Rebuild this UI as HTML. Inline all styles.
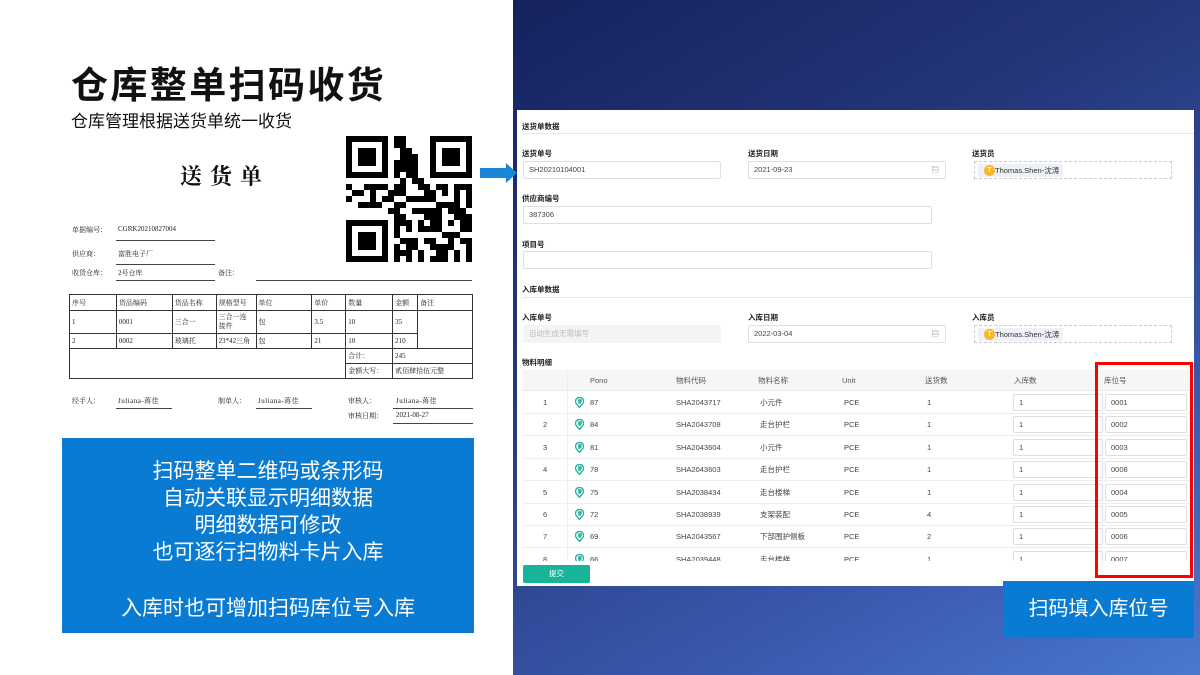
<!DOCTYPE html>
<html><head><meta charset="utf-8">
<style>
*{margin:0;padding:0;box-sizing:border-box}
body{width:1200px;height:675px;overflow:hidden;position:relative;font-family:"Liberation Sans","Noto Sans CJK SC",sans-serif;background:#fff}
.a{position:absolute;white-space:nowrap}
#right{position:absolute;left:513px;top:0;width:687px;height:675px;background:linear-gradient(150deg,#15225e 0%,#24367a 35%,#3a5aae 75%,#4a78d0 100%)}
.serif{font-family:"Liberation Serif","Noto Serif CJK SC",serif}
.doc{font-size:7px;color:#222}
.ul{position:absolute;height:1px;background:#444}
table.d{position:absolute;left:69px;top:294px;width:404px;border-collapse:collapse;font-size:7px;font-family:"Liberation Serif","Noto Serif CJK SC",serif;color:#222}
table.d td{border:1px solid #333;padding:0 2px;vertical-align:middle}
.blue{position:absolute;left:62px;top:438px;width:412px;height:195px;background:#0a7bd3;color:#fff;text-align:center;font-size:21px;font-family:"Liberation Sans","Noto Sans CJK SC",sans-serif}
.blue div{position:absolute;left:0;width:100%}
#panel{position:absolute;left:517px;top:110px;width:677px;height:476px;background:#fff;font-size:7.5px;color:#333;overflow:hidden}
.lbl{position:absolute;font-weight:bold;font-size:7.5px;color:#222}
.inp{position:absolute;border:1px solid #dcdfe6;border-radius:2px;height:18px;font-size:7.5px;line-height:16px;padding-left:5px;color:#444}
.tag{position:absolute;border:1px dashed #ccc;height:18px}
.tag span{position:absolute;left:3px;top:2px;height:13px;padding:0 4px 0 17px;background:#eef1f8;line-height:13px;font-size:7.5px;color:#333}
.tag i{position:absolute;left:6px;top:1px;width:11px;height:11px;border-radius:50%;background:#f5b82e;color:#fff;font-style:normal;font-size:7px;line-height:11px;text-align:center}
.hr{position:absolute;left:5px;right:0;height:1px;background:#e3e8f0}
.th{position:absolute;top:261px;height:20px;line-height:20px;font-size:7.5px;color:#555}
.cell{position:absolute;font-size:7.5px;color:#444;line-height:10px}
</style></head><body>

<div class="a" style="left:71px;top:55px;font-size:37px;font-weight:bold;color:#111;letter-spacing:2.4px">仓库整单扫码收货</div>
<div class="a" style="left:71px;top:107px;font-size:17px;color:#111">仓库管理根据送货单统一收货</div>

<div class="a serif" style="left:180px;top:160px;font-size:22px;font-weight:bold;letter-spacing:8px;color:#111">送货单</div>

<svg class="a" style="left:346px;top:136px" width="126" height="126" viewBox="0 0 21 21" shape-rendering="crispEdges">
<g fill="#000">
<path d="M0 0h7v7h-7zM1 1v5h5v-5zM2 2h3v3h-3z" fill-rule="evenodd"/>
<path d="M14 0h7v7h-7zM15 1v5h5v-5zM16 2h3v3h-3z" fill-rule="evenodd"/>
<path d="M0 14h7v7h-7zM1 15v5h5v-5zM2 16h3v3h-3z" fill-rule="evenodd"/>
<path d="M8 0h2v1h-2zM8 1h2v1h-2zM9 2h2v1h-2zM9 3h3v1h-3zM8 4h4v2h-4zM8 6h1v1h-1zM10 6h2v1h-2zM9 7h1v1h-1zM11 7h2v1h-2z"/>
<path d="M0 8h1v1h-1zM1 9h2v1h-2zM0 10h1v1h-1zM3 8h4v1h-4zM4 9h1v2h-1zM2 11h4v1h-4zM6 10h2v1h-2zM8 8h2v1h-2zM7 9h3v1h-3zM10 10h3v1h-3zM8 11h2v1h-2zM12 8h2v1h-2zM13 9h2v2h-2zM15 8h2v1h-2zM16 9h1v1h-1zM18 8h3v1h-3zM18 9h1v2h-1zM20 9h1v3h-1zM15 11h4v1h-4zM11 12h5v1h-5zM7 12h2v1h-2zM17 12h3v1h-3zM8 13h2v1h-2zM13 13h3v1h-3zM18 13h3v1h-3z"/>
<path d="M8 14h3v1h-3zM12 14h1v2h-1zM14 14h2v1h-2zM17 14h1v1h-1zM19 14h2v2h-2zM8 15h1v2h-1zM10 15h1v1h-1zM13 15h3v1h-3zM16 16h3v1h-3zM9 17h3v1h-3zM13 17h2v1h-2zM17 17h1v2h-1zM19 17h2v1h-2zM8 18h1v3h-1zM10 18h2v1h-2zM14 18h3v1h-3zM20 18h1v3h-1zM9 19h2v1h-2zM12 19h1v2h-1zM15 19h2v1h-2zM18 19h1v2h-1zM10 20h1v1h-1zM14 20h3v1h-3z"/>
</g></svg>

<div class="doc serif">
<div class="a" style="left:72px;top:225px">单据编号：</div><div class="a" style="left:118px;top:225px">CGRK20210827004</div>
<div class="ul" style="left:116px;top:240px;width:99px"></div>
<div class="a" style="left:72px;top:249px">供应商：</div><div class="a" style="left:118px;top:249px">富胜电子厂</div>
<div class="ul" style="left:116px;top:264px;width:99px"></div>
<div class="a" style="left:72px;top:268px">收货仓库：</div><div class="a" style="left:118px;top:268px">2号仓库</div>
<div class="ul" style="left:116px;top:280px;width:99px"></div>
<div class="a" style="left:218px;top:268px">备注：</div>
<div class="ul" style="left:256px;top:280px;width:216px"></div>
</div>

<table class="d">
<colgroup><col style="width:47px"><col style="width:56px"><col style="width:44px"><col style="width:40px"><col style="width:56px"><col style="width:34px"><col style="width:47px"><col style="width:25px"><col style="width:55px"></colgroup>
<tr style="height:16px"><td>序号</td><td>货品编码</td><td>货品名称</td><td>规格型号</td><td>单位</td><td>单价</td><td>数量</td><td>金额</td><td>备注</td></tr>
<tr style="height:23px"><td>1</td><td>0001</td><td>三合一</td><td style="line-height:9px">三合一连<br>接件</td><td>包</td><td>3.5</td><td>10</td><td>35</td><td rowspan="2"></td></tr>
<tr style="height:15px"><td>2</td><td>0002</td><td>玻璃托</td><td>23*42三角</td><td>包</td><td>21</td><td>10</td><td>210</td></tr>
<tr style="height:15px"><td colspan="6" rowspan="2"></td><td>合计：</td><td colspan="2">245</td></tr>
<tr style="height:15px"><td>金额大写：</td><td colspan="2">贰佰肆拾伍元整</td></tr>
</table>

<div class="doc serif">
<div class="a" style="left:72px;top:396px">经手人：</div><div class="a" style="left:118px;top:396px;letter-spacing:.5px">Juliana-蒋佳</div>
<div class="ul" style="left:116px;top:408px;width:56px"></div>
<div class="a" style="left:218px;top:396px">制单人：</div><div class="a" style="left:258px;top:396px;letter-spacing:.5px">Juliana-蒋佳</div>
<div class="ul" style="left:256px;top:408px;width:56px"></div>
<div class="a" style="left:348px;top:396px">审核人：</div><div class="a" style="left:396px;top:396px;letter-spacing:.5px">Juliana-蒋佳</div>
<div class="ul" style="left:393px;top:408px;width:80px"></div>
<div class="a" style="left:348px;top:411px">审核日期：</div><div class="a" style="left:396px;top:411px">2021-08-27</div>
<div class="ul" style="left:393px;top:423px;width:80px"></div>
</div>

<div class="blue">
<div style="top:17px">扫码整单二维码或条形码</div>
<div style="top:44px">自动关联显示明细数据</div>
<div style="top:71px">明细数据可修改</div>
<div style="top:98px">也可逐行扫物料卡片入库</div>
<div style="top:154px">入库时也可增加扫码库位号入库</div>
</div>

<div id="right"></div>
<svg class="a" style="left:480px;top:163px" width="38" height="20"><path d="M0 5h26v-5l11 10-11 10v-5h-26z" fill="#1a86d8"/></svg>

<div id="panel">
<div class="lbl" style="left:5px;top:11px">送货单数据</div>
<div class="hr" style="top:23px"></div>
<div class="lbl" style="left:5px;top:38px">送货单号</div>
<div class="lbl" style="left:231px;top:38px">送货日期</div>
<div class="lbl" style="left:455px;top:38px">送货员</div>
<div class="inp" style="left:6px;top:51px;width:198px">SH20210104001</div>
<div class="inp" style="left:231px;top:51px;width:198px">2021-09-23<span style="position:absolute;right:6px;color:#888">▤</span></div>
<div class="tag" style="left:457px;top:51px;width:198px"><span><i>T</i>Thomas.Shen-沈涛</span></div>
<div class="lbl" style="left:5px;top:83px">供应商编号</div>
<div class="inp" style="left:6px;top:96px;width:409px">387306</div>
<div class="lbl" style="left:5px;top:129px">项目号</div>
<div class="inp" style="left:6px;top:141px;width:409px"></div>
<div class="lbl" style="left:5px;top:174px">入库单数据</div>
<div class="hr" style="top:187px"></div>
<div class="lbl" style="left:5px;top:202px">入库单号</div>
<div class="lbl" style="left:231px;top:202px">入库日期</div>
<div class="lbl" style="left:455px;top:202px">入库员</div>
<div class="inp" style="left:6px;top:215px;width:198px;background:#f3f4f6;border-color:#f3f4f6;color:#bbb">自动生成无需填写</div>
<div class="inp" style="left:231px;top:215px;width:198px">2022-03-04<span style="position:absolute;right:6px;color:#888">▤</span></div>
<div class="tag" style="left:457px;top:215px;width:198px"><span><i>T</i>Thomas.Shen-沈涛</span></div>
<div class="lbl" style="left:5px;top:247px">物料明细</div>

<div style="position:absolute;left:6px;top:260px;width:670px;height:21px;background:#f5f6f8;border-bottom:1px solid #e8e8e8"></div>
<div style="position:absolute;left:50px;top:260px;width:1px;height:191px;background:#eee"></div>
<div class="th" style="left:73px">Pono</div>
<div class="th" style="left:159px">物料代码</div>
<div class="th" style="left:241px">物料名称</div>
<div class="th" style="left:325px">Unit</div>
<div class="th" style="left:408px">送货数</div>
<div class="th" style="left:497px">入库数</div>
<div class="th" style="left:587px">库位号</div>

<div id="rows"></div>
<div style="position:absolute;left:6px;top:451px;width:670px;height:25px;background:#fff"></div>
<div style="position:absolute;left:6px;top:455px;width:67px;height:18px;background:#19b39a;color:#fff;font-size:7.5px;text-align:center;line-height:18px;border-radius:2px">提交</div>
</div>

<div style="position:absolute;left:1095px;top:362px;width:98px;height:216px;border:3px solid #f00"></div>
<div style="position:absolute;left:1003px;top:581px;width:191px;height:57px;background:#0a7bd3;color:#fff;font-size:20px;text-align:center;line-height:57px">扫码填入库位号</div>

<script>
var d=[["87","SHA2043717","小元件","1","0001"],["84","SHA2043708","走台护栏","1","0002"],["81","SHA2043604","小元件","1","0003"],["78","SHA2043603","走台护栏","1","0008"],["75","SHA2038434","走台楼梯","1","0004"],["72","SHA2038939","支架装配","4","0005"],["69","SHA2043567","下部围护侧板","2","0006"],["66","SHA2039448","走台楼梯","1","0007"]];
var h="";
for(var i=0;i<d.length;i++){var t=281+i*22.4;var c=t+7;
h+='<div style="position:absolute;left:6px;top:'+(t+22)+'px;width:670px;height:1px;background:#eceef2"></div>';
h+='<div class="cell" style="left:26px;top:'+c+'px">'+(i+1)+'</div>';
h+='<svg style="position:absolute;left:58px;top:'+(c-1)+'px" width="9" height="11" viewBox="0 0 9 11"><path d="M4.5 0.5C7 0.5 8.5 2 8.5 4.5C8.5 7 6 8 4.5 10.5C3 8 .5 7 .5 4.5C.5 2 2 .5 4.5 .5zM3 3h3v1.5h-2v1.5h2" fill="none" stroke="#2bb39b" stroke-width="1.4"/></svg>';
h+='<div class="cell" style="left:73px;top:'+c+'px">'+d[i][0]+'</div>';
h+='<div class="cell" style="left:159px;top:'+c+'px">'+d[i][1]+'</div>';
h+='<div class="cell" style="left:243px;top:'+c+'px">'+d[i][2]+'</div>';
h+='<div class="cell" style="left:327px;top:'+c+'px">PCE</div>';
h+='<div class="cell" style="left:410px;top:'+c+'px">'+d[i][3]+'</div>';
h+='<div class="inp" style="left:496px;top:'+(t+3)+'px;width:90px;height:17px;line-height:15px">1</div>';
h+='<div class="inp" style="left:588px;top:'+(t+3)+'px;width:82px;height:17px;line-height:15px">'+d[i][4]+'</div>';}
document.getElementById("rows").outerHTML=h;
</script>
</body></html>
